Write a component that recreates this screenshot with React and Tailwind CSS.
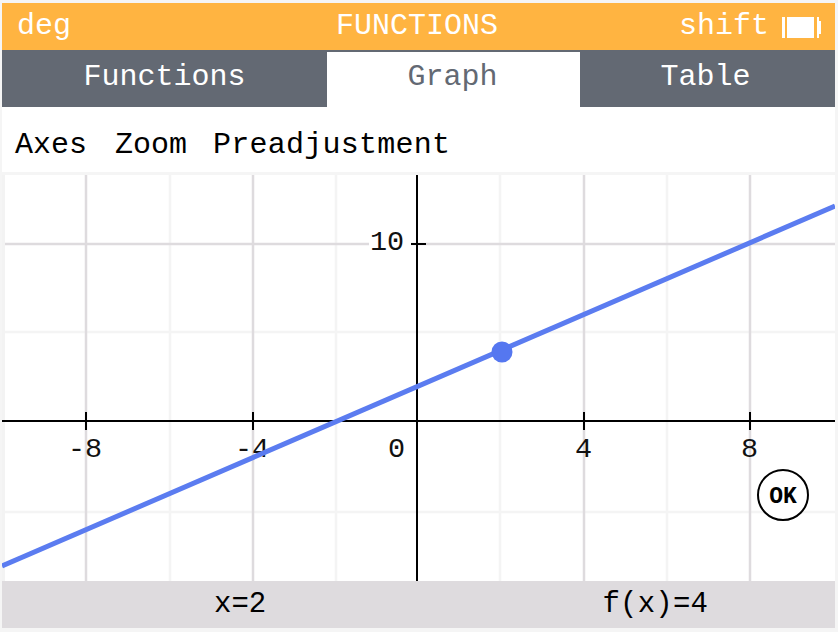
const mono = { fontFamily: '"Liberation Mono", monospace' };

function Battery() {
  return (
    <svg width="40" height="26" viewBox="0 0 40 26" className="block">
      <rect x="0" y="3" width="3" height="21" fill="#fff" />
      <rect x="5" y="3" width="27" height="21" fill="#fff" />
      <rect x="35" y="3" width="2" height="21" fill="#fff" />
      <rect x="37" y="7" width="2" height="13" fill="#fff" />
    </svg>
  );
}

function Chart() {
  const major = [86, 253, 584, 750];
  const minor = [170, 336, 500, 667];
  return (
    <svg width="833" height="406" viewBox="2 175 833 406" className="block" style={{ fontFamily: '"Liberation Mono", monospace' }}>
      <rect x="2" y="175" width="833" height="406" fill="#fff" />
      <rect x="2" y="175" width="3" height="406" fill="#f3f3f3" />
      {minor.map((x) => <line key={x} x1={x} x2={x} y1="175" y2="581" stroke="#f4f4f4" strokeWidth="2.5" />)}
      <line x1="5" x2="835" y1="332" y2="332" stroke="#f4f4f4" strokeWidth="2.5" />
      <line x1="5" x2="835" y1="512" y2="512" stroke="#f4f4f4" strokeWidth="2.5" />
      {major.map((x) => <line key={x} x1={x} x2={x} y1="175" y2="581" stroke="#dedbde" strokeWidth="2.5" />)}
      <line x1="5" x2="835" y1="244" y2="244" stroke="#dedbde" strokeWidth="2.5" />
      <rect x="369" y="228" width="42" height="30" fill="#fff" />
      <line x1="2" x2="835" y1="421" y2="421" stroke="#000" strokeWidth="2" />
      <line x1="417" x2="417" y1="175" y2="581" stroke="#000" strokeWidth="2" />
      <line x1="411" x2="426" y1="244" y2="244" stroke="#000" strokeWidth="2" />
      {[86, 253, 584, 750].map((x) => <line key={x} x1={x} x2={x} y1="412" y2="430" stroke="#000" strokeWidth="2" />)}
      <g fontSize="28.5" fill="#111">
        <text x="370" y="250">10</text>
        <text x="68" y="457">-8</text>
        <text x="235" y="457">-4</text>
        <text x="388" y="457">0</text>
        <text x="575" y="457">4</text>
        <text x="741" y="457">8</text>
      </g>
      <line x1="2" y1="566" x2="835" y2="206" stroke="#5b7cf0" strokeWidth="5" />
      <circle cx="502" cy="352" r="10.5" fill="#5577f0" />
      <circle cx="783" cy="495" r="25" fill="#fff" stroke="#000" strokeWidth="2" />
      <text x="783" y="503" textAnchor="middle" fontSize="23" fontWeight="700" fill="#000">OK</text>
    </svg>
  );
}

export default function App() {
  return (
    <div className="w-[838px] h-[632px] bg-[#f5f5f5] pt-[3px] px-[2px] pr-[3px] flex flex-col overflow-hidden" style={mono}>
      <header className="h-[47px] bg-[#ffb441] text-white text-[30px] flex items-center justify-between pl-[15px] pr-[13px] relative">
        <span className="leading-none -mt-[2px]">deg</span>
        <span className="absolute left-[334px] top-[8px] leading-none">FUNCTIONS</span>
        <div className="flex items-center gap-[13px]">
          <span className="leading-none -mt-[2px]">shift</span>
          <Battery />
        </div>
      </header>
      <nav className="h-[57px] bg-[#636973] text-[30px] grid grid-cols-[325px_253px_255px]">
        <div className="flex items-center justify-center text-white leading-none pb-[4px]">Functions</div>
        <div className="mt-[2px] bg-white flex items-center justify-center text-[#636973] leading-none pb-[6px] pr-[2px]">Graph</div>
        <div className="flex items-center justify-center text-white leading-none pb-[4px] pr-[4px]">Table</div>
      </nav>
      <div className="h-[65px] bg-white text-[30px] text-black flex items-center gap-[28px] pl-[13px] leading-none pt-[11px]">
        <span>Axes</span>
        <span>Zoom</span>
        <span className="-ml-[2px] tracking-[0.25px]">Preadjustment</span>
      </div>
      <div className="h-[3px]" />
      <Chart />
      <footer className="h-[47px] bg-[#dedbde] text-[29px] text-black grid grid-cols-2 leading-none">
        <div className="flex items-center pl-[212px]">x=2</div>
        <div className="flex items-center pl-[184px] tracking-[0.2px]">f(x)=4</div>
      </footer>
    </div>
  );
}
